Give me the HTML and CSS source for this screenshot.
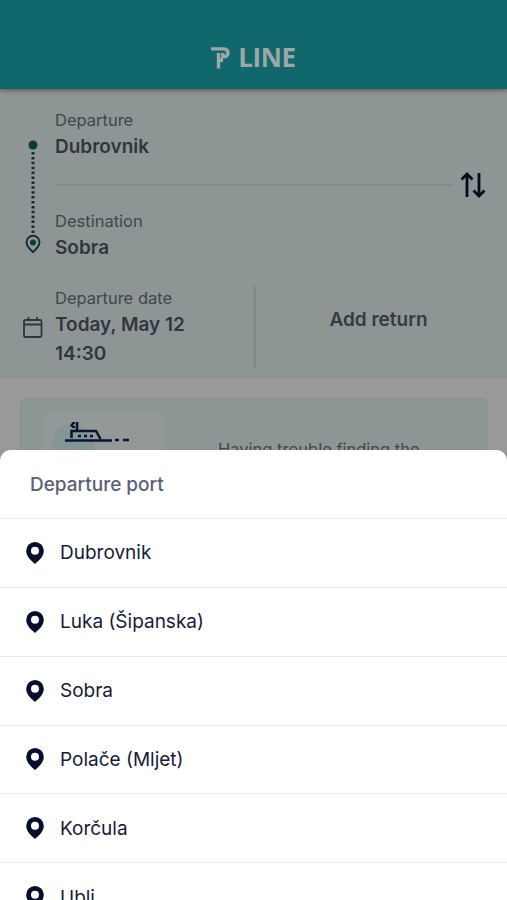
FILE: index.html
```html
<!DOCTYPE html>
<html lang="en">
<head>
<meta charset="utf-8">
<title>TP Line</title>
<link rel="stylesheet" href="styles.css">
</head>
<body>
<svg class="defs" width="0" height="0"><symbol id="pin" viewBox="0 0 18 22"><path fill-rule="evenodd" d="M9 0A8.8 8.8 0 0 0 .2 8.8C.2 14.500 5 18.500 9 22c4-3.500 8.800-7.500 8.800-13.200A8.800 8.800 0 0 0 9 0Zm0 4.700a4 4 0 1 1 0 8 4 4 0 0 1 0-8Z"/></symbol></svg>
<header class="header">
  <div class="brand">
    <svg width="19" height="22" viewBox="0 0 19 22" fill="none" stroke="currentColor" stroke-width="3.400"><path d="M0 1.900H13a3.700 3.700 0 0 1 0 8H11.800V6M7.500 6V21.500M7.500 13.300H12"/></svg>
    <span class="brand-name">LINE</span>
  </div>
</header>
<main class="search">
  <section class="route">
    <svg class="track" width="20" height="120" viewBox="0 0 20 120"><circle cx="10" cy="6" r="4.500" fill="#0c3b37"/><path d="M10 13V96" stroke="#172b35" stroke-width="3" stroke-dasharray="2.500 2.400"/><path d="M10 113C6 109.500 3.500 107 3.500 103.200a6.500 6.500 0 0 1 13 0C16.500 107 14 109.500 10 113Z" fill="none" stroke="#172b35" stroke-width="1.900"/><circle cx="10" cy="103.500" r="3" fill="#0c3b3d"/></svg>
    <div class="stops">
      <div class="field"><span class="label">Departure</span><strong class="value">Dubrovnik</strong></div>
      <hr class="rule">
      <div class="field"><span class="label">Destination</span><strong class="value">Sobra</strong></div>
    </div>
    <svg class="swap" width="26" height="26" viewBox="0 0 26 26" fill="none" stroke="#060c20" stroke-width="2.800"><path d="M7 25V2M1.500 7.500 7 2l5.500 5.500M19 1v22.500M13.500 18.500 19 24l5.500-5.500"/></svg>
  </section>
  <section class="dates">
    <svg class="calendar" width="20" height="21" viewBox="0 0 20 21" fill="none" stroke="#303740" stroke-width="1.800"><rect x="1" y="3" width="17.500" height="17" rx="1.500"/><path d="M1 7.500H18.500M5.500 0V4M14 0V4"/></svg>
    <div class="field outbound"><span class="label">Departure date</span><strong class="value">Today, May 12</strong><strong class="value">14:30</strong></div>
    <button class="return">Add return</button>
  </section>
</main>
<section class="help">
  <div class="thumb">
    <svg width="118" height="60" viewBox="0 0 118 60"><circle cx="30" cy="31" r="21" fill="#839597"/><g fill="none" stroke="#0b1630" stroke-width="2.500"><path d="M28.500 24V17H53l4.500 8M34 17V8M22 26.500H69M72 26h4M80 26h6"/><path d="M35 22h3m3 0h3m3 0h3"/></g><path d="M32 8h-2.500L27 11.500 29.500 14H32v-2h-1.500v-2H32Z" fill="#0b1630"/></svg>
  </div>
  <p class="help-text">Having trouble finding the</p>
</section>
<section class="sheet">
  <h2 class="sheet-title">Departure port</h2>
  <ul class="ports">
    <li class="port"><svg class="pin"><use href="#pin"/></svg><span>Dubrovnik</span></li>
    <li class="port"><svg class="pin"><use href="#pin"/></svg><span>Luka (Šipanska)</span></li>
    <li class="port"><svg class="pin"><use href="#pin"/></svg><span>Sobra</span></li>
    <li class="port"><svg class="pin"><use href="#pin"/></svg><span>Polače (Mljet)</span></li>
    <li class="port"><svg class="pin"><use href="#pin"/></svg><span>Korčula</span></li>
    <li class="port"><svg class="pin"><use href="#pin"/></svg><span>Ubli</span></li>
  </ul>
</section>
</body>
</html>
```
FILE: styles.css
```css
* { box-sizing: border-box; }
html, body { margin: 0; height: 900px; overflow: hidden; }
body { position: relative; background: #999; font-family: Inter, "Liberation Sans", sans-serif; }
.defs { position: absolute; }
.header { height: 89px; padding-top: 45px; background: #10686d; box-shadow: 0 1px 5px rgba(0, 0, 0, .45); position: relative; }
.brand { display: flex; justify-content: center; gap: 8px; color: #9fa6a7; }
.brand svg { margin-top: 2px; }
.brand-name { font: 700 26px/25px "Open Sans", sans-serif; letter-spacing: -.4px; }
.search { height: 289px; background: #8d9695; padding-top: 19px; }
.route { display: flex; height: 178px; }
.track { margin: 31px 0 0 23px; }
.stops { width: 397px; margin-left: 12px; }
.field { display: flex; flex-direction: column; }
.label { font-size: 16.500px; line-height: 24px; color: #3e474c; }
.value { font-size: 19px; font-weight: 600; line-height: 29px; color: #303640; }
.rule { width: 100%; height: 2px; margin: 23px 0; border: 0; background: #838c8c; }
.swap { margin: 64px 0 0 8px; }
.dates { display: flex; }
.calendar { margin: 31px 0 0 23px; }
.outbound { width: 198px; margin-left: 12px; }
.return { width: 254px; height: 82px; padding: 0 6px 14px 0; border: 0; border-left: 3px solid #828b8b; background: none; font: 600 19px/24px Inter, sans-serif; color: #343b43; }
.help { display: flex; height: 140px; margin: 20px 20px 0; border: 1px solid #83918f; border-radius: 5px; background: #8c9694; }
.thumb { width: 121px; height: 100px; margin: 15px 0 0 22px; background: #929998; }
.help-text { margin: 38px 0 0 54px; font-size: 16.500px; line-height: 24px; color: #3e474c; }
.sheet { position: absolute; top: 450px; left: 0; width: 100%; height: 450px; overflow: hidden; border-radius: 11px 11px 0 0; background: #fff; }
.sheet-title { margin: 0; padding: 0 30px; font-size: 19px; font-weight: 500; line-height: 69px; height: 68px; color: #5c6075; }
.ports { margin: 0; padding: 0; list-style: none; }
.port { display: flex; align-items: center; height: 68.850px; padding-left: 26px; border-top: 1px solid #e7e8ea; font-size: 19px; color: #161b38; }
.pin { width: 18px; height: 22px; margin-right: 16px; fill: #050f2d; }
```
